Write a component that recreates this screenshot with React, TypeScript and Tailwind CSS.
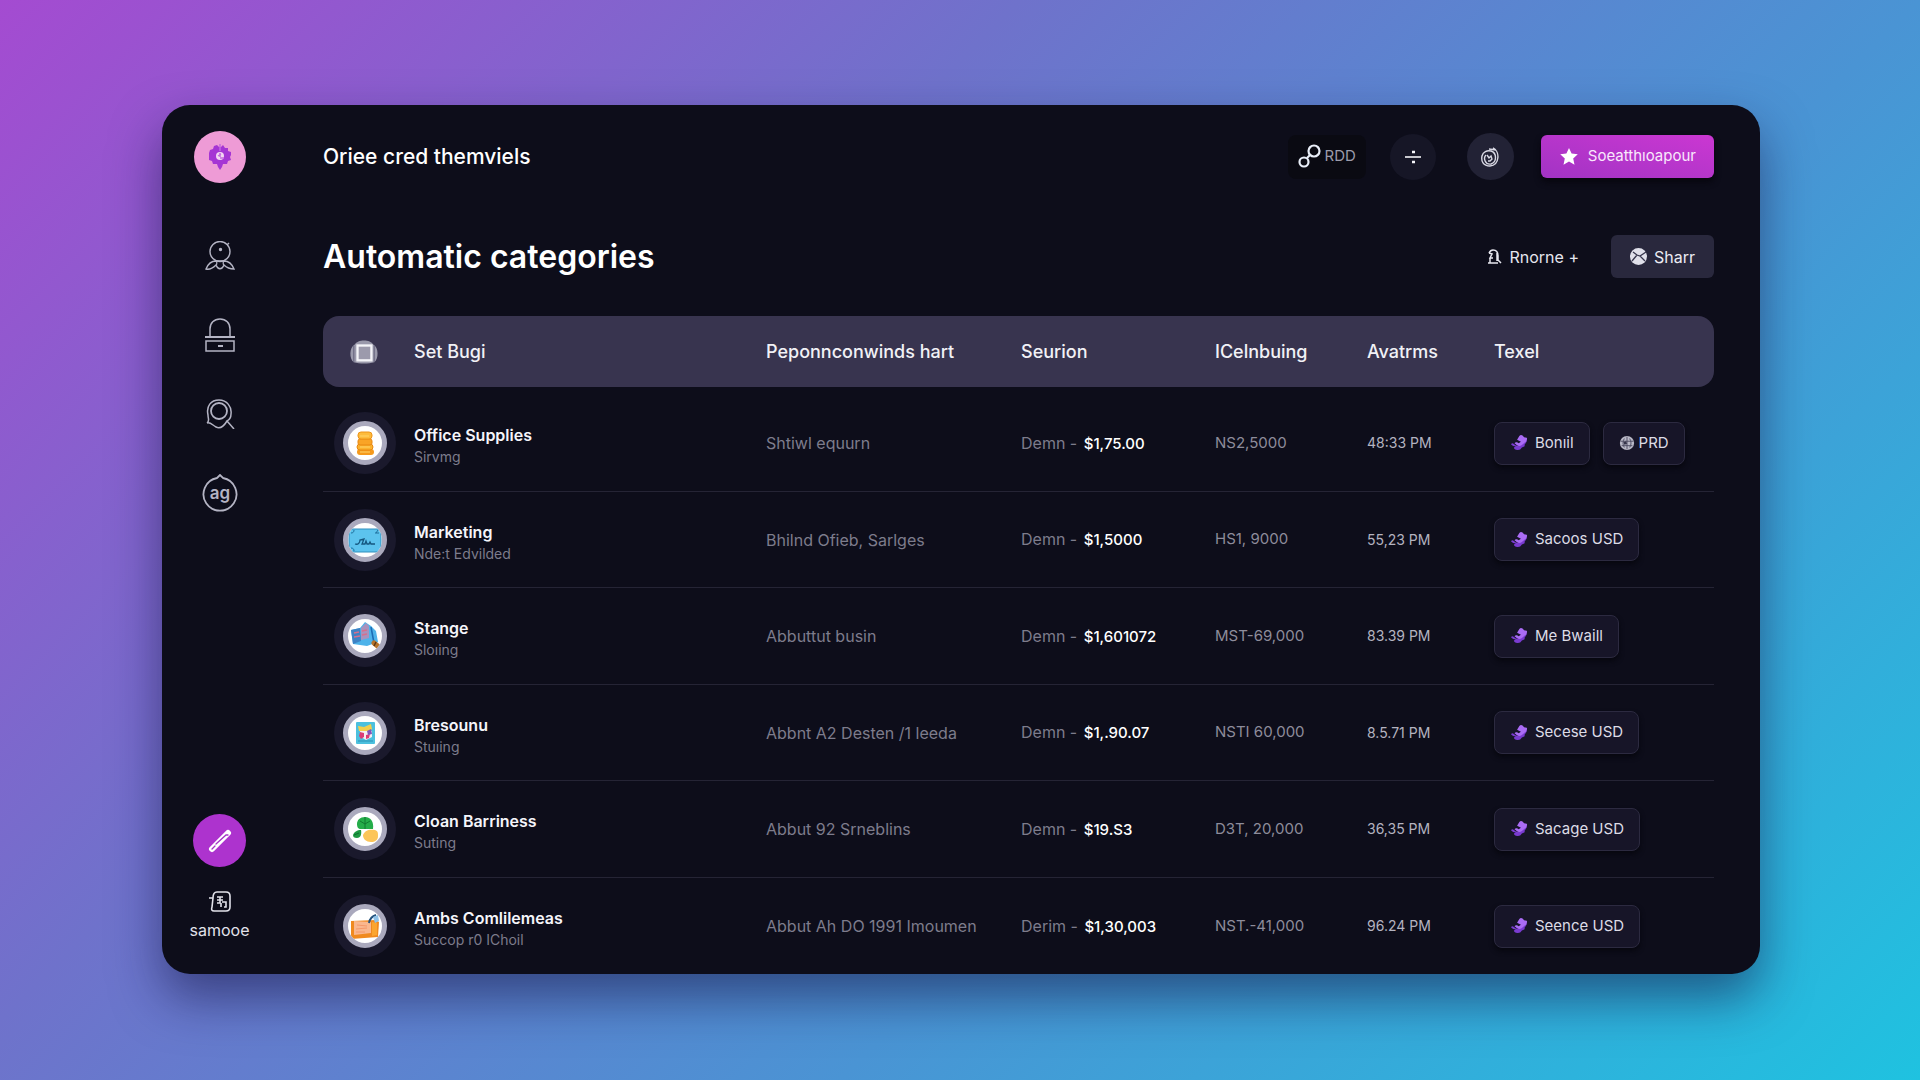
import type { ReactNode } from "react";

type Row = {
  name: string;
  sub: string;
  desc: string;
  label: string;
  amount: string;
  code: string;
  time: string;
  tags: string[];
  icon: ReactNode;
};

const CoinsIcon = () => (
  <svg viewBox="0 0 34 34" className="size-[34px]" fill="none">
    <rect x="9" y="23" width="17" height="6" rx="3" fill="#f59a1c" />
    <rect x="9" y="18" width="16" height="6" rx="3" fill="#fbb32f" stroke="#e88812" />
    <rect x="10" y="13" width="14" height="6" rx="2" fill="#f9a426" stroke="#e88812" />
    <rect x="10" y="6" width="14" height="7" rx="3" fill="#fdbb3c" stroke="#ee9418" />
    <path d="M12 10h9M12 21h10M12 26h10" stroke="#ffd46b" />
  </svg>
);

const TicketIcon = () => (
  <svg viewBox="0 0 34 34" className="size-[34px]" fill="none">
    <rect x="1" y="6" width="32" height="23" rx="2" fill="#5cc3ee" stroke="#318fbd" />
    <path d="M3 10c2 0 3-1 3-3M28 10l2-3M31 10h-4M3 25c2 0 3 1 3 3" stroke="#1e6f9c" />
    <path d="M7 21c3 1 5-1 5-4l4-1-2 5h3l1-3 1 3h2l1-2 1 2h4" stroke="#15577f" strokeWidth="1.3" />
  </svg>
);

const ScannerIcon = () => (
  <svg viewBox="0 0 34 34" className="size-[34px]" fill="none">
    <path d="M3 11l9-2 5-6 6 4 5 5 2 11-11 4-14-2z" fill="#4eb3ea" />
    <path d="M3 11l9-2 1 13-8 3z" fill="#3e82c4" />
    <path d="M13 9l5-5 3 3v12l-8 2z" fill="#a892bd" />
    <path d="M6 14l5-1M6 18l6-1M14 12l5-1M14 16l5-1" stroke="#d66f8c" strokeWidth="1.5" />
    <path d="M23 8l3 16" stroke="#1c6db4" strokeWidth="1.5" />
    <path d="M26 24l6 5" stroke="#b7742b" strokeWidth="5" strokeLinecap="round" />
    <path d="M28 23l-2 4" stroke="#5c3915" strokeWidth="1.5" />
  </svg>
);

const PosterIcon = () => (
  <svg viewBox="0 0 34 34" className="size-[34px]" fill="none">
    <rect x="8" y="6" width="19" height="22" rx="1" fill="#4cc0de" />
    <path d="M10 10l6 1 7-3 1 5-3 3-10-1z" fill="#f3cf4c" />
    <path d="M12 15h12v6l-6 3-5-3z" fill="#f5eef2" />
    <path d="M12 16l4 1v4l-3 2-2-3zM18 19l4-1-1 4-3 1z" fill="#db3d75" />
    <path d="M19 15l4-2 1 5-4 1z" fill="#8356b8" />
    <path d="M10 25h15" stroke="#2a91b5" />
  </svg>
);

const LeafIcon = () => (
  <svg viewBox="0 0 34 34" className="size-[34px]" fill="none">
    <path d="M9 12c0-4 3-7 8-7 6 0 9 5 8 12H13c-3 0-4-2-4-5z" fill="#25ad49" />
    <path d="M17 5v12M12 9l5 3M22 9l-5 3" stroke="#117a30" />
    <path d="M5 23c1-3 4-5 8-5 1 5-1 8-4 8-3 0-4-1-4-3z" fill="#1f9a42" />
    <path d="M6 23l5-2" stroke="#0f7030" />
    <path d="M15 23c2-5 6-6 12-5 3 1 3 3 3 6 0 4-3 6-7 6-5 0-8-3-8-7z" fill="#fcc559" />
  </svg>
);

const FolderIcon = () => (
  <svg viewBox="0 0 34 34" className="size-[34px]" fill="none">
    <path d="M3 12l25-1 3 2-1 15-27 2z" fill="#f08a1f" />
    <path d="M6 12l17 1v11l-17 2z" fill="#f9b78e" />
    <path d="M24 13l5 1v12l-5 1z" fill="#fba52f" />
    <path d="M9 16l10 1M8 20l11-1M8 23h9" stroke="#f4986a" />
    <path d="M21 14c1-5 3-7 7-8" stroke="#23527d" strokeWidth="2" />
    <path d="M25 8l5-2 1 6-4 2z" fill="#8fc2e8" />
  </svg>
);

const Bird = () => (
  <svg viewBox="878 120 54 56" className="size-[18px] shrink-0" aria-hidden="true">
    <path d="M880 152q4-6 9-1l5 4q6 3 12-1l17-16q7-2 6 5l-7 11q2 3-1 5l-7 3q-5 9-14 8-10-1-11-8l6-3q-9 0-15-7z" fill="#7a3bd0" />
    <path d="M899 138l7-12q5-6 10-1l5 5 8 2q3 5-2 11l-14 12q-7 4-14 0l-8-6q3-5 8-3l5 3 7-5z" fill="#aa6cf5" />
  </svg>
);

const Globe = () => (
  <svg viewBox="0 0 18 18" className="size-4 shrink-0" fill="none" aria-hidden="true">
    <circle cx="9" cy="9" r="8" fill="#b9b8c6" />
    <path d="M2 7h14M3 12h12M9 2v14M6 4c-2 3-2 7 0 10M12 4c2 3 2 7 0 10" stroke="#4a4960" />
    <path d="M5 8l3-1 1 3-3 1z" fill="#35344a" />
  </svg>
);

const rows: Row[] = [
  { name: "Office Supplies", sub: "Sirvmg", desc: "Shtiwl equurn", label: "Demn", amount: "$1,75.00", code: "NS2,5000", time: "48:33 PM", tags: ["Bonıil", "PRD"], icon: <CoinsIcon /> },
  { name: "Marketing", sub: "Nde:t Edvilded", desc: "Bhilnd Ofieb, Sarlges", label: "Demn", amount: "$1,5000", code: "HS1, 9000", time: "55,23 PM", tags: ["Sacoos USD"], icon: <TicketIcon /> },
  { name: "Stange", sub: "Sloıing", desc: "Abbuttut busin", label: "Demn", amount: "$1,601072", code: "MST-69,000", time: "83.39 PM", tags: ["Me Bwaill"], icon: <ScannerIcon /> },
  { name: "Bresounu", sub: "Stuıing", desc: "Abbnt A2 Desten /1 leeda", label: "Demn", amount: "$1,.90.07", code: "NSTI 60,000", time: "8.5.71 PM", tags: ["Secese USD"], icon: <PosterIcon /> },
  { name: "Cloan Barriness", sub: "Suting", desc: "Abbut 92 Srneblins", label: "Demn", amount: "$19.S3", code: "D3T, 20,000", time: "36,35 PM", tags: ["Sacage USD"], icon: <LeafIcon /> },
  { name: "Ambs Comlilemeas", sub: "Succop r0 IChoil", desc: "Abbut Ah DO 1991 Imoumen", label: "Derim", amount: "$1,30,003", code: "NST.-41,000", time: "96.24 PM", tags: ["Seence USD"], icon: <FolderIcon /> },
];

const navItems: { label: string; icon: ReactNode }[] = [
  {
    label: "Profile",
    icon: (
      <svg viewBox="0 0 30 30" className="size-[30px]" fill="none" stroke="currentColor" strokeWidth="1.4">
        <circle cx="15" cy="10.5" r="10" />
        <circle cx="15.5" cy="8.5" r="1" fill="currentColor" />
        <path d="M22 4l2-2M11 20c-5 0-8 3-10 8 4 1 7-1 10-4M19 20c5 0 8 3 10 8-4 0-7-1-10-4M11 20c1 1 1 3 0 4 2 5 6 5 8 0-1-1-1-3 0-4z" />
      </svg>
    ),
  },
  {
    label: "Storage",
    icon: (
      <svg viewBox="0 0 30 34" className="h-[34px] w-[30px]" fill="none" stroke="currentColor" strokeWidth="1.5">
        <path d="M5 18V11C5 5 9 1 15 1s10 4 10 10v7" />
        <path d="M0 19h30" strokeWidth="2" />
        <rect x="1" y="23" width="28" height="10" />
        <path d="M13 28h5" strokeWidth="2" />
      </svg>
    ),
  },
  {
    label: "Search",
    icon: (
      <svg viewBox="0 0 30 30" className="size-[30px]" fill="none" stroke="currentColor" strokeWidth="1.5">
        <circle cx="14" cy="12" r="8" strokeWidth="1.8" />
        <path d="M2 24c3-2 1-4 1-8C1 7 6 1 14 1s13 7 12 14c0 4-2 6-4 7l7 8M2 24c4-1 5 2 9 4s8-1 11-6" />
      </svg>
    ),
  },
  {
    label: "Account",
    icon: (
      <svg viewBox="0 0 36 38" className="h-[38px] w-9" fill="none" stroke="currentColor" strokeWidth="1.8">
        <path d="M15 4l3-3 3 3a16.500 16.500 0 1 1-6 0z" />
        <text x="18" y="25" textAnchor="middle" fontSize="17" fontWeight="600" fill="currentColor" stroke="none">ag</text>
      </svg>
    ),
  },
];

export default function App() {
  return (
    <div className="min-h-screen bg-[linear-gradient(135deg,#a44bd1_0%,#6f72cb_34%,#4a94d4_64%,#1fc2e0_100%)] pt-[105px] pr-40 pb-[106px] pl-[162px] font-[Inter,'Noto_Sans',sans-serif] text-white">
      <div className="flex rounded-[28px] bg-[#0d0d1a] shadow-[0_24px_50px_rgba(20,20,70,0.55)]">
        <aside className="flex w-[115px] shrink-0 flex-col items-center pt-[26px] pb-8">
          <a href="#home" aria-label="Home" className="flex size-[52px] items-center justify-center rounded-full bg-[#ee9bd6]">
            <svg viewBox="0 0 24 26" className="h-[26px] w-6" fill="none">
              <path d="M9 1l2 2h2l2-2 2 3 3 0 0 3 3 1v3l-1 2 1 3-3 1-1 3-4 0-1 3-2 3-2-3-1-3-4 0-1-3-3-1 0-3 0-4 1-3 3-1 1-3z" fill="#a535d4" />
              <circle cx="12" cy="12" r="4" fill="#f3d5f2" />
              <path d="M12 0v7M10 12l3-2M12 14h4M12 9v4" stroke="#c46ae0" strokeWidth="1.5" />
            </svg>
          </a>
          <nav className="mt-[53px] flex flex-col gap-[39px]">
            {navItems.map((item) => (
              <a key={item.label} href="#nav" aria-label={item.label} className="flex size-10 items-center justify-center text-[#b4b4c4]">
                {item.icon}
              </a>
            ))}
          </nav>
          <button type="button" aria-label="Edit" className="mt-auto flex size-[53px] items-center justify-center rounded-full bg-[#ad33ce]">
            <svg viewBox="0 0 24 24" className="size-6" fill="none">
              <path d="M4 20L20 4" stroke="#fff" strokeWidth="6" strokeLinecap="round" />
              <path d="M8 15L18 6h2M4 20l3-3" stroke="#a332c6" strokeWidth="1.3" strokeLinecap="round" />
            </svg>
          </button>
          <a href="#samooe" className="mt-6 flex flex-col items-center gap-1.5 text-base leading-6 text-[#e2e2ea]">
            <svg viewBox="0 0 22 21" className="h-[21px] w-[22px]" fill="none" stroke="currentColor" strokeWidth="1.6">
              <path d="M0 7h4c0-4 1-6 4-6h9c3 0 4 1 4 4v11c0 3-1 4-4 4H5c-2 0-3-1-2-4l1-9" />
              <path d="M8 6h6M8 9h6M11 6v6H8M12 12v4M13 11h4v5h-2" />
            </svg>
            samooe
          </a>
        </aside>

        <main className="min-w-0 flex-1 px-[46px] pt-7">
          <header className="flex h-[47px] items-center">
            <p className="text-[21px] leading-7 font-medium">Oriee cred themviels</p>
            <button type="button" className="ml-auto flex h-11 items-center gap-1 rounded-lg bg-[#0a0a12] px-2.5 text-[15px] text-[#9c9cab]">
              <svg viewBox="0 0 23 25" className="h-[25px] w-[23px]" fill="none" stroke="#e9eef8" strokeWidth="2.2">
                <circle cx="16" cy="7" r="5.500" />
                <circle cx="6" cy="18" r="4.500" />
                <path d="M9 14l3-3" />
              </svg>
              RDD
            </button>
            <button type="button" aria-label="Divide" className="ml-6 flex size-[46px] items-center justify-center rounded-full bg-[#161626]">
              <svg viewBox="0 0 16 14" className="h-3.5 w-4" fill="none" stroke="#f4f4f8" strokeWidth="1.6">
                <path d="M0 7h16" />
                <path d="M7 2h3M7 12h3" strokeWidth="2.4" />
              </svg>
            </button>
            <button type="button" aria-label="Activity" className="ml-[31px] flex size-[47px] items-center justify-center rounded-full bg-[#222235]">
              <svg viewBox="0 0 18 20" className="h-5 w-[18px]" fill="none" stroke="#d9d9e4" strokeWidth="1.4">
                <path d="M12 1c7 3 7 17-3 18C2 19 0 14 1 9c1-4 5-6 9-5 6 2 6 11 0 13-6 1-8-6-5-9M8 2l7 1" />
                <path d="M6 8l2 3 2-2 1 3-2 2-2 0" />
              </svg>
            </button>
            <button type="button" className="ml-[27px] flex h-[43px] items-center gap-2.5 rounded-md bg-linear-to-tr from-[#a233c4] to-[#cb37d2] pr-[18px] pl-[19px] text-[15px] text-[#f9e8fc] shadow-[0_4px_6px_#07060e]">
              <svg viewBox="0 0 18 17" className="h-[17px] w-[18px]" fill="#fff">
                <path d="M9 0l2.600 5.600 6.200.7-4.600 4.200 1.300 6.200L9 13.600l-5.500 3.100 1.300-6.200L.2 6.300l6.200-.7z" />
              </svg>
              Soeatthıoapour
            </button>
          </header>

          <div className="mt-[55px] flex h-[43px] items-center">
            <h1 className="text-[32px] leading-[43px] font-semibold">Automatic categories</h1>
            <button type="button" className="ml-auto flex items-center gap-2 text-base text-[#e6e6ee]">
              <svg viewBox="0 0 14 15" className="h-[15px] w-3.5" fill="none" stroke="currentColor" strokeWidth="1.5">
                <path d="M1 4c1-2 2-3 4-3 4 0 5 3 5 6v4l3 3M1 4l3 1-2 4h3M2 9v5M0 14h10M9 4v8" />
              </svg>
              Rnorne +
            </button>
            <button type="button" className="ml-8 flex h-[43px] items-center gap-[7px] rounded-md bg-[#29283d] px-[19px] text-base text-[#ececf4]">
              <svg viewBox="0 0 17 17" className="size-[17px]" fill="none">
                <circle cx="8.500" cy="8.500" r="8.500" fill="#e0e0ea" />
                <path d="M3 4l4 3 3 1 6-4M7 7l-5 6M10 8l5 5" stroke="#37364d" strokeWidth="1.300" />
              </svg>
              Sharr
            </button>
          </div>

          <table className="mt-[38px] w-full table-fixed border-separate border-spacing-0 text-left">
            <colgroup>
              <col className="w-[91px]" />
              <col />
              <col className="w-[255px]" />
              <col className="w-[194px]" />
              <col className="w-[152px]" />
              <col className="w-[127px]" />
              <col className="w-[220px]" />
            </colgroup>
            <thead className="text-lg whitespace-nowrap text-[#f1f1f6]">
              <tr className="h-[71px] *:bg-[#38344f] *:font-medium">
                <th className="rounded-l-2xl pl-[26px]">
                  <svg viewBox="0 0 30 28" className="h-[26px] w-[30px]" role="img" aria-label="Icon">
                    <path d="M5 6C8 0 22 0 25 6c6 3 6 16 1 19-6 2-16 2-22 0C-1 22-1 9 5 6z" fill="#9a99ab" />
                    <path d="M4 7v18M26 7v18" stroke="#605e78" />
                    <rect x="8" y="7" width="15" height="16" fill="#9c9aac" stroke="#f4f4f8" strokeWidth="2.500" />
                  </svg>
                </th>
                <th>Set Bugi</th>
                <th>Peponnconwinds hart</th>
                <th>Seurion</th>
                <th>ICelnbuing</th>
                <th>Avatrms</th>
                <th className="rounded-r-2xl">Texel</th>
              </tr>
            </thead>
            <tbody className="text-base whitespace-nowrap text-[#7d7c8c] before:block before:h-2 before:content-['']">
              {rows.map((row) => (
                <tr key={row.name} className="h-[97px] *:border-b *:border-[#252435] even:h-24 last:*:border-b-0">
                  <td className="pl-[11px]">
                    <span className="flex size-[62px] items-center justify-center rounded-full bg-[#1a192c]">
                      <span className="flex size-11 items-center justify-center overflow-hidden rounded-full border-[5px] border-[#aaa9bd] bg-white">
                        {row.icon}
                      </span>
                    </span>
                  </td>
                  <td className="pt-1.5">
                    <div className="leading-[22px] font-semibold text-[#f5f5fa]">{row.name}</div>
                    <div className="text-sm leading-[22px]">{row.sub}</div>
                  </td>
                  <td>{row.desc}</td>
                  <td>
                    {row.label} - <span className="ml-0.5 text-[15px] font-medium text-white">{row.amount}</span>
                  </td>
                  <td className="text-[15px] text-[#8d8c9b]">{row.code}</td>
                  <td className="text-sm text-[#b4b3c0]">{row.time}</td>
                  <td>
                    <div className="flex gap-[13px]">
                      {row.tags.map((tag) => (
                        <button
                          key={tag}
                          type="button"
                          className={`flex h-[43px] items-center rounded-lg border border-[#2c2a40] bg-[#171528] pr-[15px] pl-[15px] text-[15px] text-[#dddce6] shadow-[0_3px_5px_#07070f] ${tag === "PRD" ? "gap-1" : "gap-[7px]"}`}
                        >
                          {tag === "PRD" ? <Globe /> : <Bird />}
                          {tag}
                        </button>
                      ))}
                    </div>
                  </td>
                </tr>
              ))}
            </tbody>
          </table>
        </main>
      </div>
    </div>
  );
}
